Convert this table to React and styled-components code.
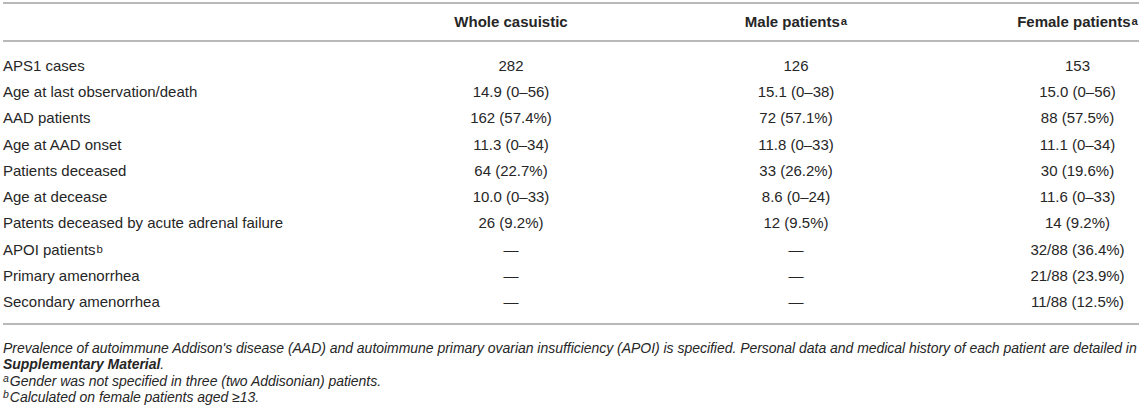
import React from "react";
import styled, { createGlobalStyle } from "styled-components";

const Global = createGlobalStyle`
  html, body { margin: 0; padding: 0; background: #fff; }
  body { font-family: "Liberation Sans", Arial, sans-serif; color: #262626; }
`;

const Page = styled.div`
  width: 1136px;
  padding: 2px 3px 0 3px;
`;

const Table = styled.div`
  display: grid;
  grid-template-columns: 437px 142px 428px 129px;
  border-top: 2px solid #b9b9b9;
  border-bottom: 2px solid #b9b9b9;
`;

const HeadRow = styled.div`
  display: contents;
`;

const HeadCell = styled.div`
  height: 38px;
  padding-bottom: 2px;
  box-sizing: border-box;
  display: flex;
  align-items: center;
  justify-content: ${(p) => (p.$left ? "flex-start" : "center")};
  padding-left: ${(p) => p.$shift || 0}px;
  font-weight: bold;
  font-size: 15px;
  white-space: nowrap;
  border-bottom: 2px solid #b9b9b9;
`;

const Body = styled.div`
  grid-column: 1 / -1;
  display: grid;
  grid-template-columns: subgrid;
  padding: 10px 0 8px;
`;

const Cell = styled.div`
  height: 26.3px;
  display: flex;
  align-items: center;
  justify-content: ${(p) => (p.$left ? "flex-start" : "center")};
  padding-left: ${(p) => p.$shift || 0}px;
  font-size: 15px;
  white-space: nowrap;
`;

const Sup = styled.sup`
  font-size: 0.76em;
  line-height: 0;
  vertical-align: 0.45em;
  margin-left: 1px;
`;

const Caption = styled.div`
  padding-top: 15px;
  font-size: 14px;
  line-height: 16.5px;
  letter-spacing: -0.03px;
  font-style: italic;
`;

const Para = styled.p`
  margin: 0;
`;

const Strong = styled.b`
  font-weight: bold;
`;

const FootSup = styled.sup`
  font-size: 0.75em;
  line-height: 0;
  vertical-align: 0.4em;
  margin-right: 1px;
`;

const rows = [
  ["APS1 cases", "282", "126", "153"],
  ["Age at last observation/death", "14.9 (0–56)", "15.1 (0–38)", "15.0 (0–56)"],
  ["AAD patients", "162 (57.4%)", "72 (57.1%)", "88 (57.5%)"],
  ["Age at AAD onset", "11.3 (0–34)", "11.8 (0–33)", "11.1 (0–34)"],
  ["Patients deceased", "64 (22.7%)", "33 (26.2%)", "30 (19.6%)"],
  ["Age at decease", "10.0 (0–33)", "8.6 (0–24)", "11.6 (0–33)"],
  ["Patents deceased by acute adrenal failure", "26 (9.2%)", "12 (9.5%)", "14 (9.2%)"],
  [["APOI patients", "b"], "—", "—", "32/88 (36.4%)"],
  ["Primary amenorrhea", "—", "—", "21/88 (23.9%)"],
  ["Secondary amenorrhea", "—", "—", "11/88 (12.5%)"],
];

export default function App() {
  return (
    <>
      <Global />
      <Page>
        <Table>
          <HeadRow>
            <HeadCell $left />
            <HeadCell>Whole casuistic</HeadCell>
            <HeadCell>
              Male patients<Sup>a</Sup>
            </HeadCell>
            <HeadCell $shift={6}>
              Female patients<Sup>a</Sup>
            </HeadCell>
          </HeadRow>
          <Body>
            {rows.map((r, i) => (
              <React.Fragment key={i}>
                <Cell $left>
                  {Array.isArray(r[0]) ? (
                    <>
                      {r[0][0]}
                      <Sup>{r[0][1]}</Sup>
                    </>
                  ) : (
                    r[0]
                  )}
                </Cell>
                <Cell>{r[1]}</Cell>
                <Cell>{r[2]}</Cell>
                <Cell $shift={6}>{r[3]}</Cell>
              </React.Fragment>
            ))}
          </Body>
        </Table>
        <Caption>
          <Para>
            Prevalence of autoimmune Addison's disease (AAD) and autoimmune primary ovarian insufficiency (APOI) is
            specified. Personal data and medical history of each patient are detailed in
            <br />
            <Strong>Supplementary Material</Strong>.
          </Para>
          <Para>
            <FootSup>a</FootSup>Gender was not specified in three (two Addisonian) patients.
          </Para>
          <Para>
            <FootSup>b</FootSup>Calculated on female patients aged ≥13.
          </Para>
        </Caption>
      </Page>
    </>
  );
}
